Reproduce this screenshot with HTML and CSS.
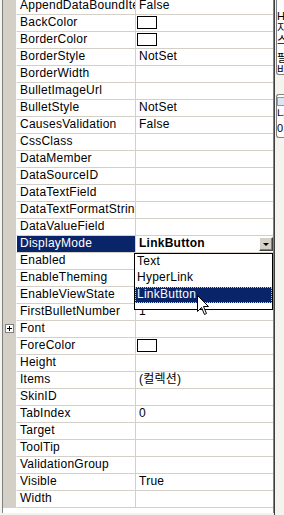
FILE: index.html
```html
<!DOCTYPE html>
<html>
<head>
    <meta charset="utf-8">
    <link rel="stylesheet" href="styles.css">
</head>
<body>

    <div class="screen">
        <div class="grid">
            <div class="rows">
                <div class="row"><div class="margin"></div><div class="name">AppendDataBoundItems</div><div class="value">False</div></div>
                <div class="row"><div class="margin"></div><div class="name">BackColor</div><div class="value"><span class="swatch"></span></div></div>
                <div class="row"><div class="margin"></div><div class="name">BorderColor</div><div class="value"><span class="swatch"></span></div></div>
                <div class="row"><div class="margin"></div><div class="name">BorderStyle</div><div class="value">NotSet</div></div>
                <div class="row"><div class="margin"></div><div class="name">BorderWidth</div><div class="value"></div></div>
                <div class="row"><div class="margin"></div><div class="name">BulletImageUrl</div><div class="value"></div></div>
                <div class="row"><div class="margin"></div><div class="name">BulletStyle</div><div class="value">NotSet</div></div>
                <div class="row"><div class="margin"></div><div class="name">CausesValidation</div><div class="value">False</div></div>
                <div class="row"><div class="margin"></div><div class="name">CssClass</div><div class="value"></div></div>
                <div class="row"><div class="margin"></div><div class="name">DataMember</div><div class="value"></div></div>
                <div class="row"><div class="margin"></div><div class="name">DataSourceID</div><div class="value"></div></div>
                <div class="row"><div class="margin"></div><div class="name">DataTextField</div><div class="value"></div></div>
                <div class="row"><div class="margin"></div><div class="name">DataTextFormatString</div><div class="value"></div></div>
                <div class="row"><div class="margin"></div><div class="name">DataValueField</div><div class="value"></div></div>
                <div class="row selected"><div class="margin"></div><div class="name">DisplayMode</div><div class="value combo"><b>LinkButton</b><span class="drop-btn"></span></div></div>
                <!-- values of the next rows sit under the open list -->
                <div class="row"><div class="margin"></div><div class="name">Enabled</div><div class="value"></div></div>
                <div class="row"><div class="margin"></div><div class="name">EnableTheming</div><div class="value"></div></div>
                <div class="row"><div class="margin"></div><div class="name">EnableViewState</div><div class="value"></div></div>
                <div class="row"><div class="margin"></div><div class="name">FirstBulletNumber</div><div class="value">1</div></div>
                <div class="row"><div class="margin"><svg class="expander" width="9" height="9" viewBox="0 0 9 9"><rect x="0.5" y="0.5" width="8" height="8" fill="#fff" stroke="#808080"/><path d="M2 4.5H7M4.5 2V7" stroke="#000"/></svg></div><div class="name">Font</div><div class="value"></div></div>
                <div class="row"><div class="margin"></div><div class="name">ForeColor</div><div class="value"><span class="swatch"></span></div></div>
                <div class="row"><div class="margin"></div><div class="name">Height</div><div class="value"></div></div>
                <div class="row"><div class="margin"></div><div class="name">Items</div><div class="value">(컬렉션)</div></div>
                <div class="row"><div class="margin"></div><div class="name">SkinID</div><div class="value"></div></div>
                <div class="row"><div class="margin"></div><div class="name">TabIndex</div><div class="value">0</div></div>
                <div class="row"><div class="margin"></div><div class="name">Target</div><div class="value"></div></div>
                <div class="row"><div class="margin"></div><div class="name">ToolTip</div><div class="value"></div></div>
                <div class="row"><div class="margin"></div><div class="name">ValidationGroup</div><div class="value"></div></div>
                <div class="row"><div class="margin"></div><div class="name">Visible</div><div class="value">True</div></div>
                <div class="row"><div class="margin"></div><div class="name">Width</div><div class="value"></div></div>
            </div>

            <!-- open combo list of DisplayMode -->
            <div class="droplist">
                <div class="opt">Text</div>
                <div class="opt">HyperLink</div>
                <div class="opt current">LinkButton</div>
            </div>

            <svg class="cursor" width="12" height="20" viewBox="0 0 12 20">
                <path d="M0.5 0.5V16.5L4.5 12.5L7.5 19.5L9.5 18.5L6.5 11.5H11.5Z" fill="#fff" stroke="#000"/>
            </svg>
        </div>

        <div class="side">
            <div class="side-box top">
                <span>H</span>
                <span>지</span>
                <span>스</span>
                <span class="rule"></span>
                <span>필</span>
                <span>바</span>
            </div>
            <div class="side-box bottom">
                <span class="side-icon"></span>
                <span>나</span>
                <span>0</span>
            </div>
        </div>
    </div>

</body>
</html>
```

FILE: styles.css
```css
* {
    box-sizing: border-box;
}

body {
    margin: 0;
    background: #f4f3ee;
    font-family: "Liberation Sans", "Noto Sans CJK KR", sans-serif;
    font-size: 12px;
    letter-spacing: 0.25px;
    color: #000;
}

.screen {
    display: flex;
    height: 515px;
    overflow: hidden;
}

.grid {
    position: relative;
    flex: none;
    margin-left: 2px;
    width: 272px;
    height: 513px;
    border-left: 1px solid #808080;
    border-right: 1px solid #808080;
    background: #fff;
    overflow: hidden;
}

.rows {
    margin-top: -2px;
}

.row {
    display: flex;
    height: 17px;
    line-height: 14px;
}

.margin {
    flex: none;
    width: 13px;
    background: #d4d0c8;
}

.expander {
    display: block;
    margin: 3px 0 0 2px;
}

.name {
    flex: none;
    width: 120px;
    padding-left: 3px;
    border-left: 1px solid #fff;
    border-right: 1px solid #d4d0c8;
    border-bottom: 1px solid #d4d0c8;
    white-space: nowrap;
    overflow: hidden;
}

.value {
    flex: 1;
    display: flex;
    padding-left: 3px;
    border-bottom: 1px solid #d4d0c8;
    white-space: nowrap;
    overflow: hidden;
}

.row.selected .name {
    background: #0a246a;
    color: #fff;
}

.swatch {
    width: 20px;
    height: 13px;
    margin: 1px 0 0 -2px;
    border: 1px solid #000;
    background: #fff;
}

.combo {
    justify-content: space-between;
}

.drop-btn {
    display: flex;
    align-items: center;
    justify-content: center;
    width: 14px;
    height: 14px;
    margin-top: 1px;
    background: #d4d0c8;
    border: 1px solid;
    border-color: #fff #404040 #404040 #fff;
    box-shadow: inset -1px -1px #808080;
}

.drop-btn::after {
    content: "";
    border-left: 3px solid transparent;
    border-right: 3px solid transparent;
    border-top: 3px solid #000;
}

.droplist {
    position: absolute;
    left: 131px;
    top: 253px;
    width: 139px;
    height: 57px;
    border: 1px solid #000;
    background: #fff;
}

.opt {
    height: 16px;
    line-height: 14px;
    padding-left: 2px;
    white-space: nowrap;
}

.opt.current {
    margin-top: 1px;
    background: #0a246a;
    color: #fff;
    outline: 1px dotted #c8c8c8;
    outline-offset: -1px;
}

.cursor {
    position: absolute;
    left: 194px;
    top: 295px;
}

.side {
    flex: 1;
    padding-left: 1px;
    border-left: 1px solid #404040;
    background: #f4f3ee;
}

.side-box {
    display: flex;
    flex-direction: column;
    border: 1px solid #808080;
    border-right: 0;
    border-radius: 3px 0 0 3px;
    background: #fcfcfc;
    font-size: 11px;
    line-height: 12px;
    white-space: nowrap;
    overflow: hidden;
}

.side-box.top {
    margin-top: -3px;
    height: 78px;
    padding-top: 12px;
}

.side-box.bottom {
    margin-top: 19px;
    height: 44px;
    padding-top: 2px;
    gap: 2px;
}

.rule {
    height: 1px;
    margin: 3px 0;
    background: #808080;
}

.side-icon {
    width: 9px;
    height: 9px;
    border: 1px solid #7f9db9;
    background: #dbe6f4;
}
```
